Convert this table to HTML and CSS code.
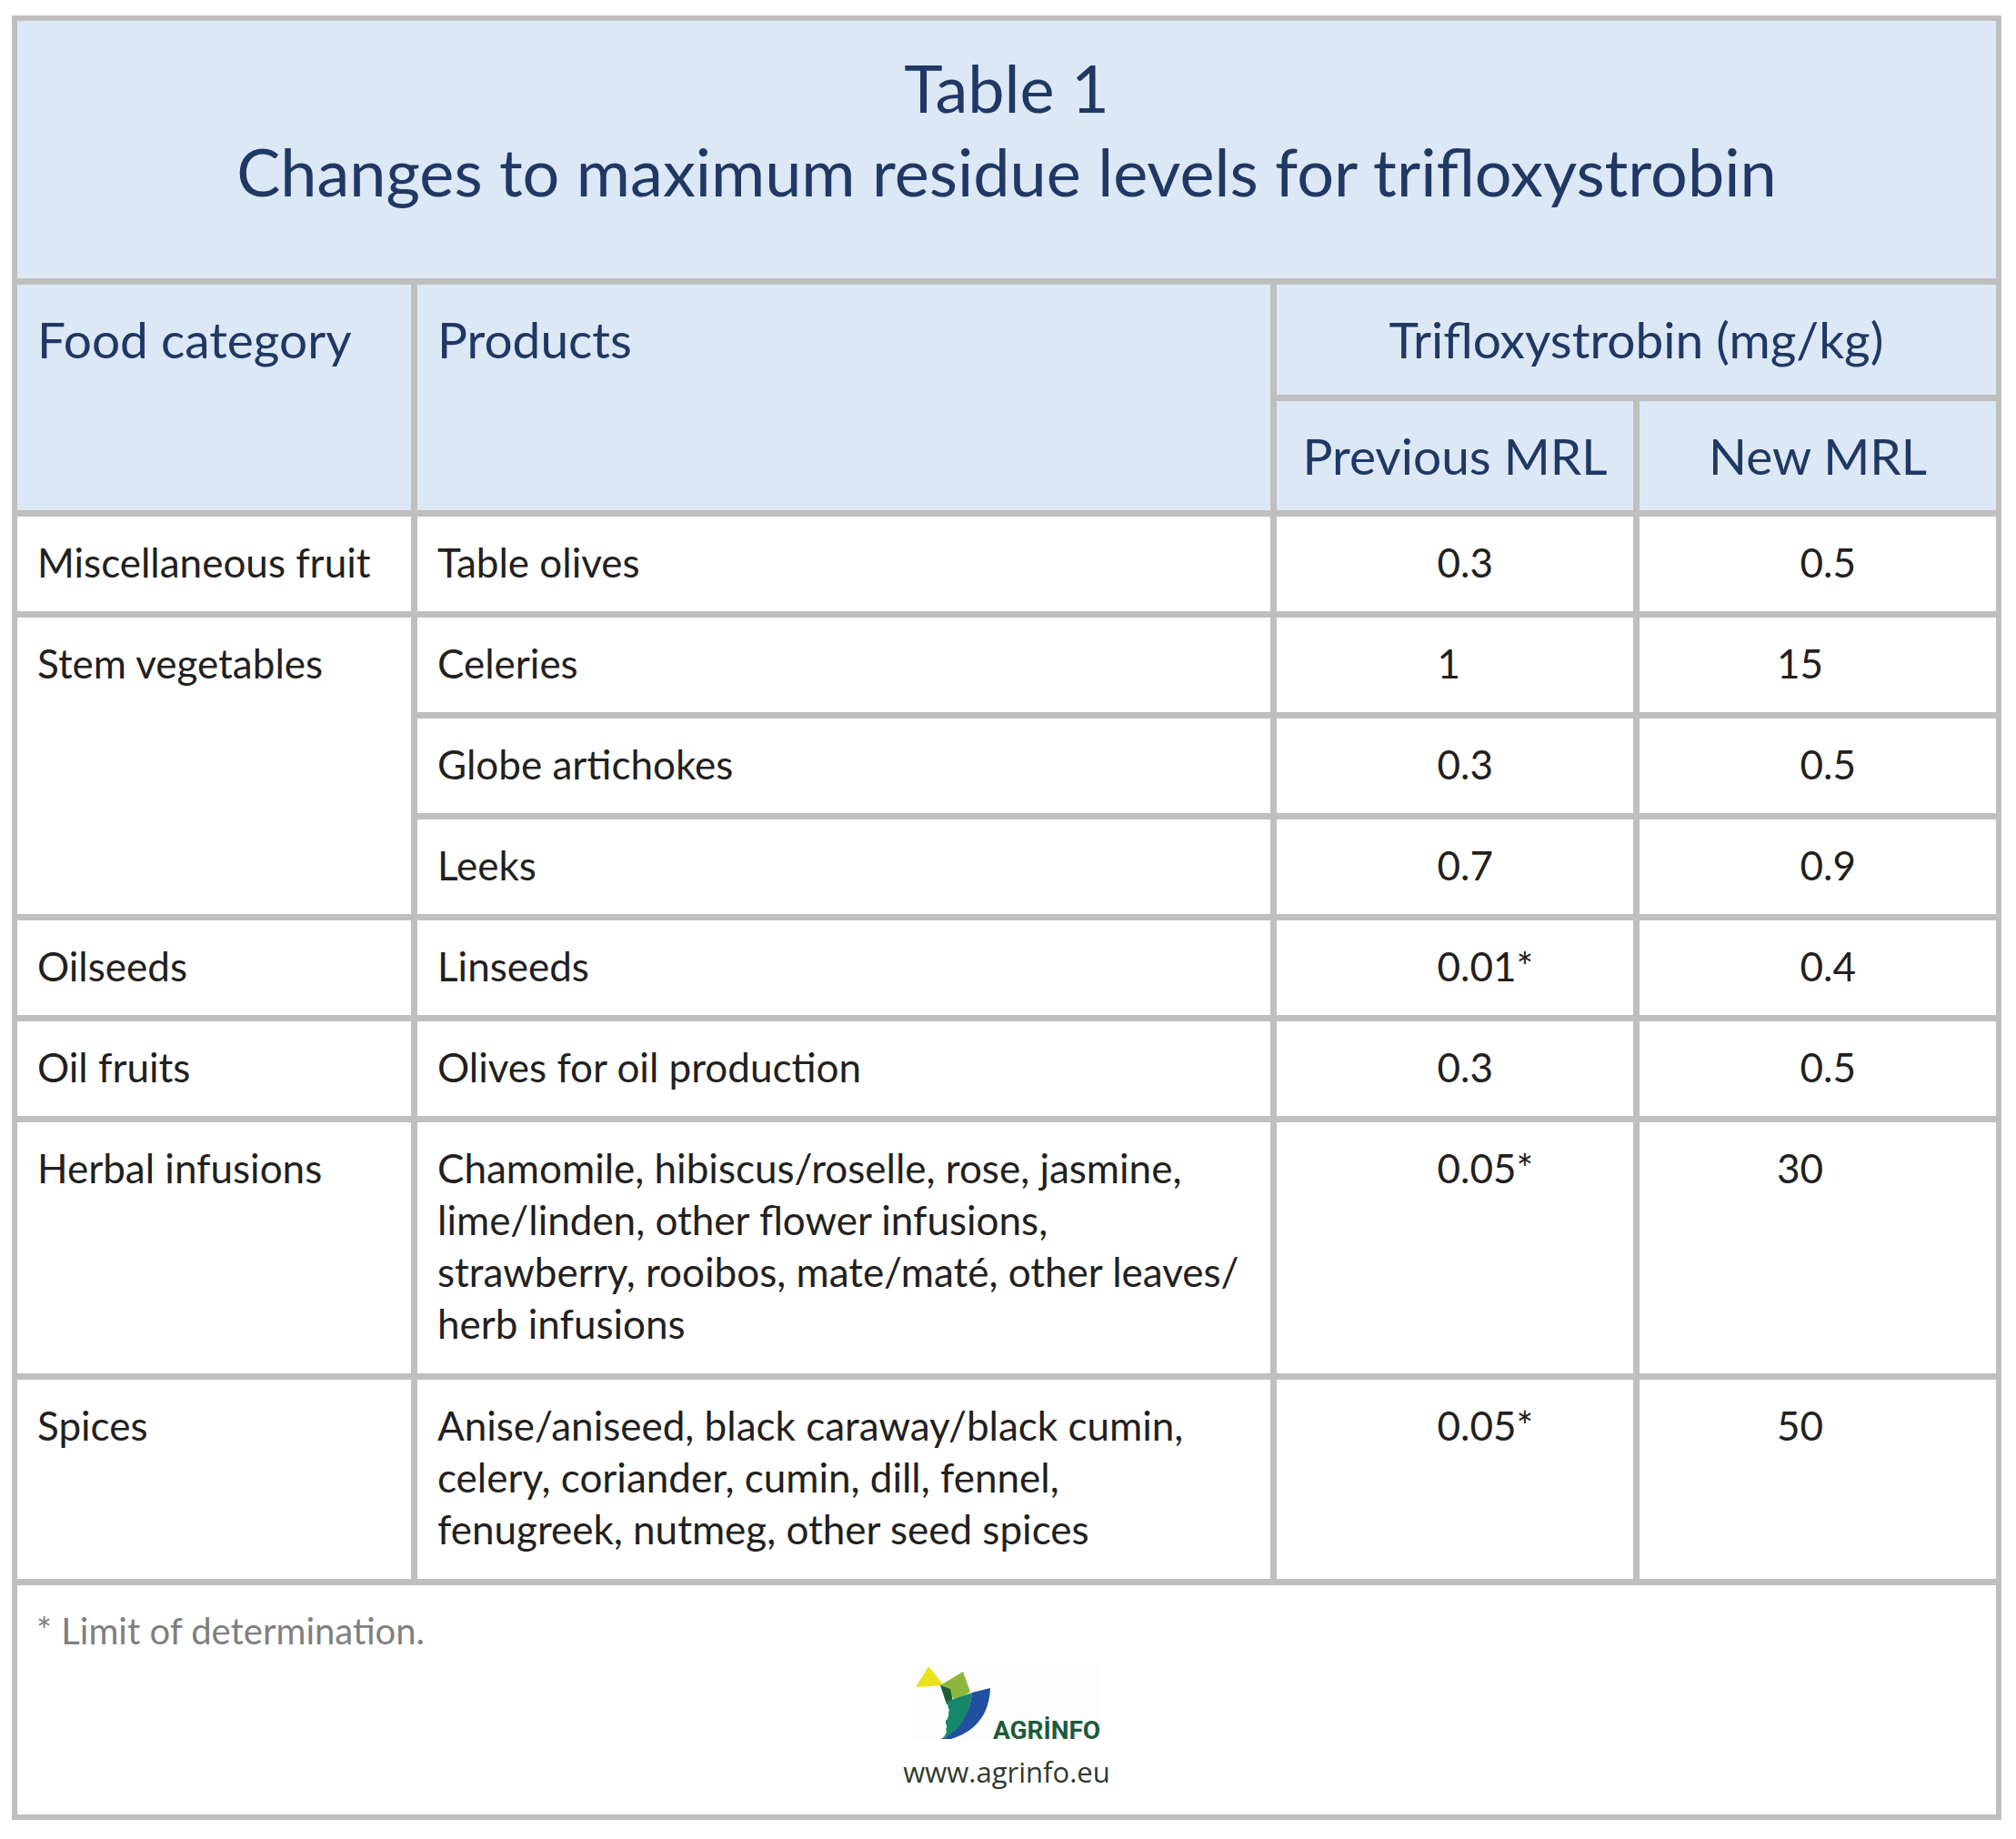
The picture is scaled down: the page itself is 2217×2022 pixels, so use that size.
FILE: index.html
```html
<!DOCTYPE html>
<html lang="en">
<head>
<meta charset="utf-8">
<title>Table 1 – Changes to maximum residue levels for trifloxystrobin</title>
<link rel="stylesheet" href="styles.css">
</head>
<body>
<div class="sheet">
  <div class="title">Table 1<br>Changes to maximum residue levels for trifloxystrobin</div>
  <div class="grid">
    <div class="h h-cat">Food category</div>
    <div class="h h-prod">Products</div>
    <div class="h h-group">Trifloxystrobin (mg/kg)</div>
    <div class="h h-sub">Previous MRL</div>
    <div class="h h-sub">New MRL</div>

    <div class="c">Miscellaneous fruit</div>
    <div class="c">Table olives</div>
    <div class="c num"><span class="int">0</span>.3</div>
    <div class="c num"><span class="int">0</span>.5</div>

    <div class="c span3">Stem vegetables</div>
    <div class="c">Celeries</div>
    <div class="c num"><span class="int">1</span></div>
    <div class="c num"><span class="int">15</span></div>
    <div class="c">Globe artichokes</div>
    <div class="c num"><span class="int">0</span>.3</div>
    <div class="c num"><span class="int">0</span>.5</div>
    <div class="c">Leeks</div>
    <div class="c num"><span class="int">0</span>.7</div>
    <div class="c num"><span class="int">0</span>.9</div>

    <div class="c">Oilseeds</div>
    <div class="c">Linseeds</div>
    <div class="c num"><span class="int">0</span>.01*</div>
    <div class="c num"><span class="int">0</span>.4</div>

    <div class="c">Oil fruits</div>
    <div class="c">Olives for oil production</div>
    <div class="c num"><span class="int">0</span>.3</div>
    <div class="c num"><span class="int">0</span>.5</div>

    <div class="c">Herbal infusions</div>
    <div class="c multi">Chamomile, hibiscus/roselle, rose, jasmine,<br>lime/linden, other flower infusions,<br>strawberry, rooibos, mate/maté, other leaves/<br>herb infusions</div>
    <div class="c num"><span class="int">0</span>.05*</div>
    <div class="c num"><span class="int">30</span></div>

    <div class="c">Spices</div>
    <div class="c multi">Anise/aniseed, black caraway/black cumin,<br>celery, coriander, cumin, dill, fennel,<br>fenugreek, nutmeg, other seed spices</div>
    <div class="c num"><span class="int">0</span>.05*</div>
    <div class="c num"><span class="int">50</span></div>
  </div>
  <div class="foot">
    <p class="note">* Limit of determination.</p>
    <div class="logo">
      <svg class="mark" width="86" height="84" viewBox="0 0 86 84" aria-hidden="true">
        <polygon points="17,2 3,25 34,23" fill="#ece21a"/>
        <polygon points="30,23 55,8 63,30 47,40" fill="#8fb63c"/>
        <polygon points="30,23 41,27 44,41 37,44" fill="#1d5e34"/>
        <path d="M37,41 L65,31 C63,45 60,58 52,72 L31,82 C36,78 38,75 36,71 C39,68 35,65 36,62 C41,58 38,53 40,50 C38,47 39,45 37,41 Z" fill="#17876a"/>
        <path d="M65,31 L85,26 C84,50 74,72 42,82 L31,82 C52,74 62,56 65,31 Z" fill="#2150a0"/>
      </svg>
      <span class="brand">AGRİNFO</span>
    </div>
    <p class="url">www.agrinfo.eu</p>
  </div>
</div>
</body>
</html>
```

FILE: styles.css
```css
* { box-sizing: border-box; }

html, body {
  margin: 0;
  padding: 0;
  background: #ffffff;
}

body {
  font-family: "Lato", "Open Sans", "Liberation Sans", sans-serif;
  color: #231f20;
}

.sheet {
  margin: 17px 0 0 13px;
  width: 2188px;
  border: 6px solid #bfbfbf;
  background: #bfbfbf;
  display: flex;
  flex-direction: column;
  gap: 7px;
}

.title {
  height: 283px;
  background: #dce8f5;
  color: #1f3864;
  text-align: center;
  font-size: 72px;
  line-height: 92px;
  padding-top: 27px;
}

.grid {
  display: grid;
  grid-template-columns: 433px 938px 392px 392px;
  grid-template-rows: 121px 120px repeat(6, 104px) 276px 219px;
  gap: 7px;
}

.h {
  background: #dce8f5;
  color: #1f3864;
  font-size: 55px;
  line-height: 70px;
  padding: 25px 22px 0;
}

.h-cat { grid-column: 1; grid-row: 1 / span 2; }
.h-prod { grid-column: 2; grid-row: 1 / span 2; }
.h-group { grid-column: 3 / span 2; grid-row: 1; text-align: center; }
.h-sub { text-align: center; padding-left: 0; padding-right: 0; }

.c {
  background: #ffffff;
  font-size: 44px;
  line-height: 57px;
  padding: 22px 22px 0;
}

.span3 { grid-row: span 3; }

.multi { white-space: nowrap; }

.num { padding-left: 140px; }

.int {
  display: inline-block;
  width: 62px;
  text-align: right;
}

.foot {
  height: 252px;
  background: #ffffff;
  display: flex;
  flex-direction: column;
  align-items: center;
}

.note {
  align-self: stretch;
  margin: 0;
  padding: 25px 21px 0;
  font-size: 40px;
  line-height: 50px;
  color: #7f7f7f;
}

.logo {
  margin-top: 12px;
  display: flex;
  align-items: flex-end;
  background: #fdfdfd;
}

.mark { display: block; }

.brand {
  font-family: "Roboto", "Liberation Sans", sans-serif;
  font-weight: 700;
  font-size: 28px;
  line-height: 22px;
  color: #1e5a3a;
  margin-left: 2px;
}

.url {
  margin: 14px 0 0;
  font-family: "Open Sans", "Liberation Sans", sans-serif;
  font-size: 31px;
  line-height: 40px;
  color: #2f3a2c;
}
```
